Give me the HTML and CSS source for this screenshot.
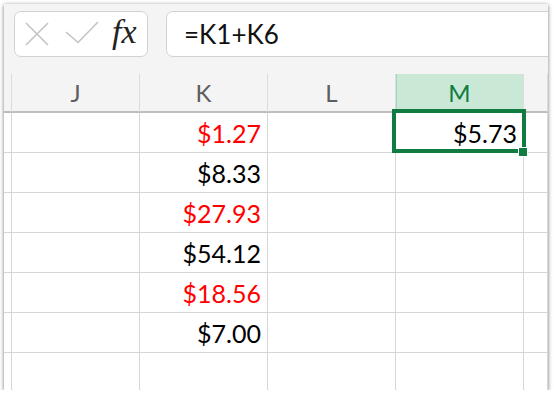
FILE: index.html
```html
<!DOCTYPE html>
<html lang="en">

<head>
  <meta charset="UTF-8">
  <meta name="viewport" content="width=device-width, initial-scale=1.0">
  <title>Sheet</title>

  <link rel="stylesheet" href="styles.css">
</head>

<body>
  <div class="window">
    <div class="formula-bar">
      <div class="fx-box">
        <svg class="icon-cancel" width="24" height="24" viewBox="0 0 24 24">
          <path d="M1 1 L23 23 M23 1 L1 23" />
        </svg>
        <svg class="icon-enter" width="34" height="23" viewBox="0 0 34 23">
          <path d="M1 11 L13 21.5 L33 1" />
        </svg>
        <span class="fx">fx</span>
      </div>
      <div class="formula-input">=K1+K6</div>
    </div>

    <div class="sheet">
      <div class="row head">
        <div class="cell stub"></div>
        <div class="cell">J</div>
        <div class="cell">K</div>
        <div class="cell">L</div>
        <div class="cell active">M</div>
        <div class="cell"></div>
      </div>
      <div class="row">
        <div class="cell stub"></div>
        <div class="cell"></div>
        <div class="cell num neg">$1.27</div>
        <div class="cell"></div>
        <div class="cell num selected">$5.73</div>
        <div class="cell"></div>
      </div>
      <div class="row">
        <div class="cell stub"></div>
        <div class="cell"></div>
        <div class="cell num">$8.33</div>
        <div class="cell"></div>
        <div class="cell"></div>
        <div class="cell"></div>
      </div>
      <div class="row">
        <div class="cell stub"></div>
        <div class="cell"></div>
        <div class="cell num neg">$27.93</div>
        <div class="cell"></div>
        <div class="cell"></div>
        <div class="cell"></div>
      </div>
      <div class="row">
        <div class="cell stub"></div>
        <div class="cell"></div>
        <div class="cell num">$54.12</div>
        <div class="cell"></div>
        <div class="cell"></div>
        <div class="cell"></div>
      </div>
      <div class="row">
        <div class="cell stub"></div>
        <div class="cell"></div>
        <div class="cell num neg">$18.56</div>
        <div class="cell"></div>
        <div class="cell"></div>
        <div class="cell"></div>
      </div>
      <div class="row">
        <div class="cell stub"></div>
        <div class="cell"></div>
        <div class="cell num">$7.00</div>
        <div class="cell"></div>
        <div class="cell"></div>
        <div class="cell"></div>
      </div>
      <div class="row">
        <div class="cell stub"></div>
        <div class="cell"></div>
        <div class="cell"></div>
        <div class="cell"></div>
        <div class="cell"></div>
        <div class="cell"></div>
      </div>
    </div>
  </div>
</body>

</html>
```

FILE: styles.css
```css
body {
  margin: 0;
  background: #fff;
  font-family: Lato, "Open Sans", sans-serif;
}

.window {
  width: 544px;
  height: 386px;
  margin: 4px 0 0 4px;
  background: #fff;
  box-shadow: 0 1px 4px rgba(0, 0, 0, 0.55);
  overflow: hidden;
}

.formula-bar {
  display: flex;
  gap: 18px;
  padding: 7px 0 17px 10px;
  background: #f4f4f4;
}

.fx-box {
  width: 134px;
  height: 46px;
  box-sizing: border-box;
  display: flex;
  align-items: center;
  padding-left: 10px;
  background: #fff;
  border: 1px solid #d2d2d2;
  border-radius: 7px;
}

.icon-cancel path,
.icon-enter path {
  fill: none;
  stroke: #c4c4c4;
  stroke-width: 1.6;
}

.icon-enter {
  margin-left: 16px;
  margin-top: -3px;
}

.fx {
  margin-left: 13px;
  margin-top: -4px;
  font-family: "Liberation Serif", serif;
  font-style: italic;
  font-size: 34px;
  line-height: 1;
  color: #222;
}

.formula-input {
  flex: 1;
  height: 46px;
  box-sizing: border-box;
  margin-right: -10px;
  display: flex;
  align-items: center;
  padding-left: 17px;
  background: #fff;
  border: 1px solid #d2d2d2;
  border-radius: 7px;
  font-size: 26px;
  color: #111;
}

.row {
  display: grid;
  grid-template-columns: 8px repeat(4, 128px) 1fr;
  height: 40px;
}

.cell {
  box-sizing: border-box;
  border-right: 1px solid #d6d6d6;
  border-bottom: 1px solid #d6d6d6;
}

.head {
  height: 39px;
  background: #f4f4f4;
}

.head .cell {
  display: flex;
  align-items: center;
  justify-content: center;
  border-right-color: #dcdcdc;
  border-bottom: 2px solid #bdbdbd;
  font-size: 24px;
  color: #5e5e5e;
}

.head .active {
  background: #c9e8d5;
  box-shadow: inset 1px 0 0 #a8d6ba;
  color: #107c41;
}

.num {
  padding: 5px 6px 0 0;
  text-align: right;
  font-size: 25px;
  line-height: 30px;
  color: #000;
}

.neg {
  color: #ff0000;
}

.selected {
  position: relative;
}

.selected::before {
  content: "";
  position: absolute;
  top: -4px;
  left: -4px;
  right: -3px;
  bottom: -1px;
  border: 4px solid #107c41;
}

.selected::after {
  content: "";
  position: absolute;
  right: -5px;
  bottom: -5px;
  width: 8px;
  height: 8px;
  background: #107c41;
  border: 1px solid #fff;
}
```
